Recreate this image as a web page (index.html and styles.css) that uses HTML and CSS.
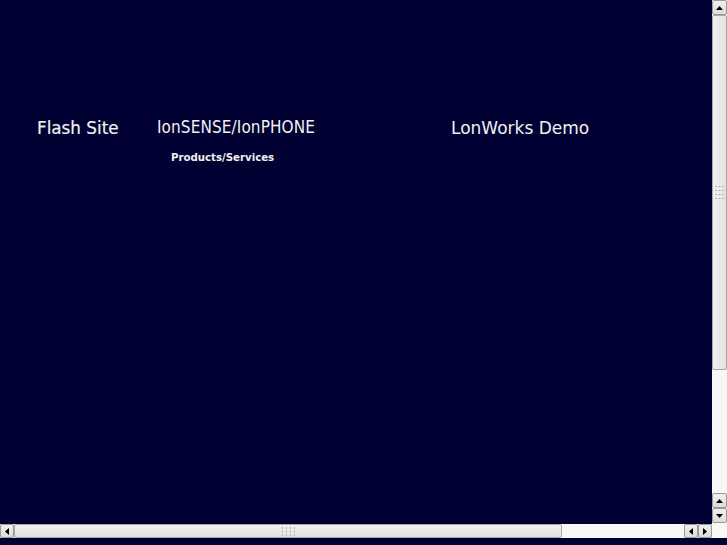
FILE: index.html
```html
<!DOCTYPE html>
<html lang="en">

<head>
    <meta charset="UTF-8">
    <title>LonWorks</title>
    <meta name="viewport" content="width=device-width, initial-scale=1">
    <link rel="stylesheet" href="styles.css">
</head>

<body>

    <div class="window">
        <div class="content">
            <div class="nav">
                <div class="nav-item flash">Flash Site</div>
                <div class="nav-item lon">
                    <div class="lon-title">IonSENSE/IonPHONE</div>
                    <div class="lon-sub">Products/Services</div>
                </div>
                <div class="nav-item demo">LonWorks Demo</div>
            </div>
        </div>

        <div class="vscroll">
            <div class="sb-btn">
                <svg width="7" height="4" viewBox="0 0 7 4"><polygon points="0,4 7,4 3.5,0" fill="#000"/></svg>
            </div>
            <div class="sb-thumb v-thumb">
                <svg width="9" height="13" viewBox="0 0 9 13">
                    <g fill="#b4b4b4">
                        <rect x="0" y="0" width="2" height="1"/><rect x="3.5" y="0" width="2" height="1"/><rect x="7" y="0" width="2" height="1"/>
                        <rect x="0" y="4" width="2" height="1"/><rect x="3.5" y="4" width="2" height="1"/><rect x="7" y="4" width="2" height="1"/>
                        <rect x="0" y="8" width="2" height="1"/><rect x="3.5" y="8" width="2" height="1"/><rect x="7" y="8" width="2" height="1"/>
                        <rect x="0" y="12" width="2" height="1"/><rect x="3.5" y="12" width="2" height="1"/><rect x="7" y="12" width="2" height="1"/>
                    </g>
                </svg>
            </div>
            <div class="sb-track"></div>
            <div class="sb-btn">
                <svg width="7" height="4" viewBox="0 0 7 4"><polygon points="0,4 7,4 3.5,0" fill="#000"/></svg>
            </div>
            <div class="sb-btn">
                <svg width="7" height="4" viewBox="0 0 7 4"><polygon points="0,0 7,0 3.5,4" fill="#000"/></svg>
            </div>
        </div>

        <div class="hscroll">
            <div class="sb-btn">
                <svg width="4" height="7" viewBox="0 0 4 7"><polygon points="4,0 4,7 0,3.5" fill="#000"/></svg>
            </div>
            <div class="sb-thumb h-thumb">
                <svg width="13" height="9" viewBox="0 0 13 9">
                    <g fill="#b4b4b4">
                        <rect x="0" y="0" width="1" height="2"/><rect x="4" y="0" width="1" height="2"/><rect x="8" y="0" width="1" height="2"/><rect x="12" y="0" width="1" height="2"/>
                        <rect x="0" y="3.5" width="1" height="2"/><rect x="4" y="3.5" width="1" height="2"/><rect x="8" y="3.5" width="1" height="2"/><rect x="12" y="3.5" width="1" height="2"/>
                        <rect x="0" y="7" width="1" height="2"/><rect x="4" y="7" width="1" height="2"/><rect x="8" y="7" width="1" height="2"/><rect x="12" y="7" width="1" height="2"/>
                    </g>
                </svg>
            </div>
            <div class="sb-track"></div>
            <div class="sb-btn">
                <svg width="4" height="7" viewBox="0 0 4 7"><polygon points="4,0 4,7 0,3.5" fill="#000"/></svg>
            </div>
            <div class="sb-btn">
                <svg width="4" height="7" viewBox="0 0 4 7"><polygon points="0,0 0,7 4,3.5" fill="#000"/></svg>
            </div>
        </div>

        <div class="corner"></div>
    </div>

</body>

</html>
```

FILE: styles.css
```css
* {
    box-sizing: border-box;
}

body {
    margin: 0;
    padding: 0;
    height: 545px;
    overflow: hidden;
    background: #000033;
    font-family: "DejaVu Sans", sans-serif;
    color: #f0f0f0;
}

.window {
    display: grid;
    grid-template-columns: 712px 15px;
    grid-template-rows: 523px 15px;
}

.content {
    overflow: hidden;
}

.nav {
    display: flex;
    align-items: flex-start;
    padding: 117px 0 0 37px;
}

.nav-item {
    font-size: 17px;
    line-height: 20px;
    white-space: nowrap;
}

.flash {
    width: 120px;
    margin-top: 1px;
    font-size: 16.8px;
    -webkit-text-stroke: 0.2px #f0f0f0;
}

.lon {
    width: 294px;
}

.lon-title {
    font-family: "DejaVu Sans Condensed", "DejaVu Sans", sans-serif;
    font-stretch: condensed;
    font-size: 17px;
    line-height: 20px;
    letter-spacing: 0.1px;
}

.lon-sub {
    font-size: 10.2px;
    font-weight: bold;
    line-height: 13px;
    margin: 14px 0 0 14px;
}

.demo {
    margin-top: 1px;
}

/* fake scrollbars */
.vscroll {
    display: flex;
    flex-direction: column;
    background: #f6f6f6;
}

.hscroll {
    display: flex;
    background: #f6f6f6;
    margin-top: 1px;
    height: 14px;
}

.corner {
    background: #f8f8f8;
}

.sb-btn {
    flex: 0 0 15px;
    height: 15px;
    display: flex;
    justify-content: center;
    align-items: center;
    background: linear-gradient(#f0f0f0, #dcdcdc);
    border: 1px solid #9a9a9a;
    border-radius: 2px;
}

.hscroll .sb-btn {
    flex-basis: 14px;
    height: 14px;
}

.sb-thumb {
    display: flex;
    justify-content: center;
    align-items: center;
    border: 1px solid #a8a8a8;
    border-radius: 2px;
}

.v-thumb {
    height: 355px;
    background: linear-gradient(90deg, #f2f2f2, #e2e2e2);
}

.h-thumb {
    width: 548px;
    background: linear-gradient(#f2f2f2, #e2e2e2);
}

.sb-track {
    flex: 1;
    background: #f7f7f7;
}
```
